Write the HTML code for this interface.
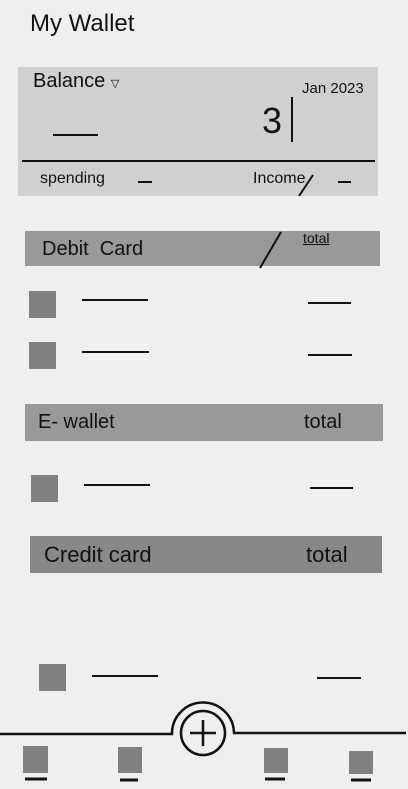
<!DOCTYPE html>
<html><head><style>
body{margin:0;width:408px;height:789px;background:#efefef;position:relative;overflow:hidden;font-family:"Liberation Sans",sans-serif;color:#111}
.a{position:absolute}
.t{position:absolute;white-space:nowrap}
</style></head><body>
<div class="t" style="left:30px;top:10px;font-size:24px">My Wallet</div>
<div class="a" style="left:18px;top:67px;width:360px;height:129px;background:#d0d0d0"></div>
<div class="a" style="left:25px;top:231px;width:355px;height:35px;background:#999"></div>
<div class="a" style="left:25px;top:404px;width:358px;height:37px;background:#999"></div>
<div class="a" style="left:30px;top:536px;width:352px;height:37px;background:#888"></div>
<div class="a" style="left:29px;top:291px;width:27px;height:27px;background:#808080"></div>
<div class="a" style="left:29px;top:342px;width:27px;height:27px;background:#808080"></div>
<div class="a" style="left:31px;top:475px;width:27px;height:27px;background:#808080"></div>
<div class="a" style="left:39px;top:664px;width:27px;height:27px;background:#808080"></div>
<div class="a" style="left:23px;top:746px;width:25px;height:27px;background:#808080"></div>
<div class="a" style="left:118px;top:747px;width:24px;height:26px;background:#808080"></div>
<div class="a" style="left:264px;top:748px;width:24px;height:25px;background:#808080"></div>
<div class="a" style="left:349px;top:751px;width:24px;height:23px;background:#808080"></div>
<div class="t" style="left:33px;top:70px;font-size:20px">Balance <span style="font-size:11px">▽</span></div>
<div class="t" style="left:302px;top:80px;font-size:15px">Jan 2023</div>
<div class="t" style="left:262px;top:100px;font-size:36px">3</div>
<div class="t" style="left:40px;top:170px;font-size:16px">spending</div>
<div class="t" style="left:253px;top:170px;font-size:16px">Income</div>
<div class="t" style="left:42px;top:238px;font-size:20px">Debit &nbsp;Card</div>
<div class="t" style="left:303px;top:230px;font-size:14px;text-decoration:underline">total</div>
<div class="t" style="left:38px;top:411px;font-size:20px">E- wallet</div>
<div class="t" style="left:304px;top:411px;font-size:20px">total</div>
<div class="t" style="left:44px;top:542px;font-size:22px">Credit card</div>
<div class="t" style="left:306px;top:542px;font-size:22px">total</div>
<svg class="a" style="left:0;top:0" width="408" height="789" fill="none" stroke="#111" stroke-width="2">
<path d="M292 97V142"/>
<path d="M53 135H98"/>
<path d="M22 161H375"/>
<path d="M138 182H152M338 182H351"/>
<path d="M313 175L299 196"/>
<path d="M281 232L260 268"/>
<path d="M82 300H148M308 303H351M82 352H149M308 355H352M84 485H150M310 488H353M92 676H158M317 678H361"/>
<path d="M0 734H172A31 31 0 0 1 234 733H406" stroke-width="2.5"/>
<circle cx="203" cy="733" r="22" stroke-width="2.5"/>
<path d="M203 720V746M190 733H216" stroke-width="2.5"/>
<path d="M25 779H47M120 780H138M265 779H285M351 780H371" stroke-width="3"/>
</svg>
</body></html>
